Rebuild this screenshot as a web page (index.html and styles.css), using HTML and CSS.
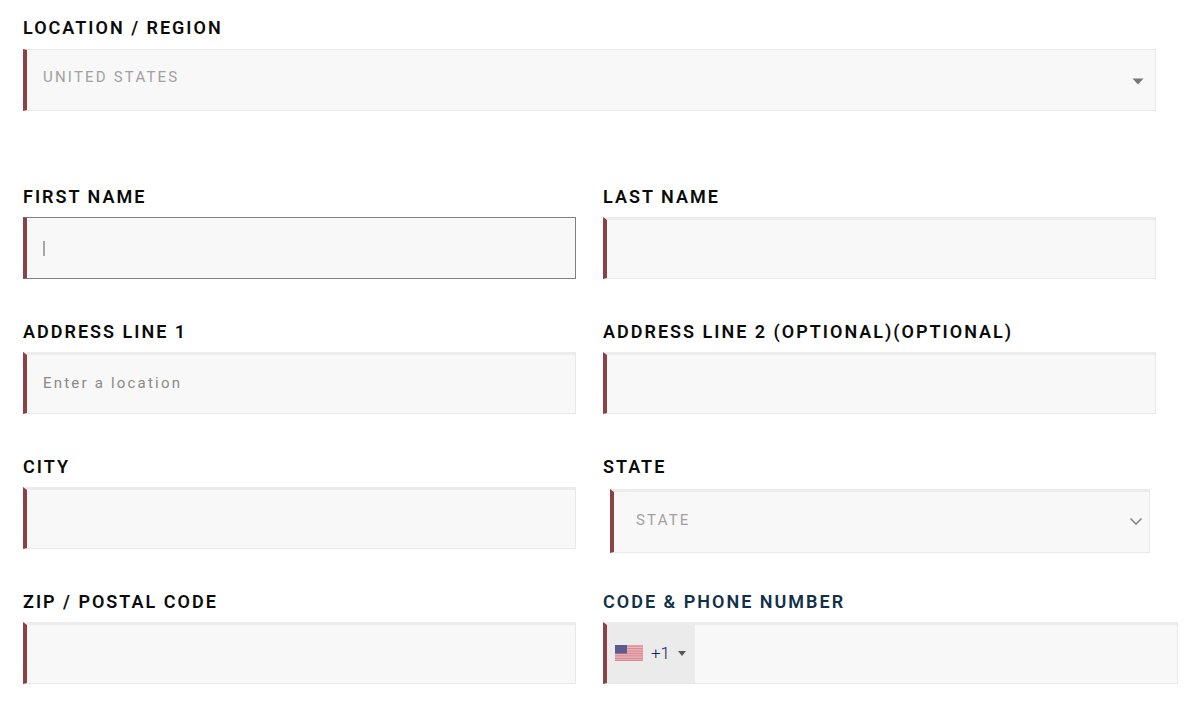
FILE: index.html
```html
<!DOCTYPE html>
<html lang="en">
<head>
  <meta charset="UTF-8" />
  <title>Address form</title>
  <link rel="stylesheet" href="styles.css">
</head>
<body>

<form class="address-form">
  <!-- Region -->
  <div class="region-row">
    <div class="group">
      <label>LOCATION / REGION</label>
      <div class="field hint">UNITED STATES
        <svg class="arrow" width="12" height="7" viewBox="0 0 12 7"><path d="M0.5 0.5h11L6 6.5z" fill="#777"/></svg>
      </div>
    </div>
  </div>

  <div class="grid">
    <div class="group">
      <label>FIRST NAME</label>
      <div class="field focused"><span class="caret"></span></div>
    </div>
    <div class="group">
      <label>LAST NAME</label>
      <div class="field top"></div>
    </div>

    <div class="group">
      <label>ADDRESS LINE 1</label>
      <div class="field top placeholder">Enter a location</div>
    </div>
    <div class="group">
      <label>ADDRESS LINE 2 (OPTIONAL)(OPTIONAL)</label>
      <div class="field top"></div>
    </div>

    <div class="group">
      <label>CITY</label>
      <div class="field top"></div>
    </div>
    <div class="group">
      <label>STATE</label>
      <div class="field top hint state">STATE
        <svg class="chevron" width="14" height="9" viewBox="0 0 14 9"><path d="M1.5 1.5L7 7l5.500-5.500" fill="none" stroke="#888" stroke-width="1.600"/></svg>
      </div>
    </div>

    <div class="group">
      <label>ZIP / POSTAL CODE</label>
      <div class="field top"></div>
    </div>
    <div class="group">
      <label class="navy">CODE &amp; PHONE NUMBER</label>
      <div class="field top phone">
        <div class="dial">
          <svg class="flag" width="28" height="16" viewBox="0 0 28 16">
            <rect width="28" height="16" fill="#e9b9be"/>
            <path d="M0 1.200h28M0 3.700h28M0 6.100h28M0 8.500h28M0 10.900h28M0 13.300h28M0 15.400h28" stroke="#d98a93" stroke-width="1.300"/>
            <rect width="12" height="8.500" fill="#5b5b8e"/>
          </svg>
          <span class="code">+1</span>
          <svg width="8" height="5" viewBox="0 0 8 5"><path d="M0 0h8L4 5z" fill="#555"/></svg>
        </div>
      </div>
    </div>
  </div>
</form>

</body>
</html>
```

FILE: styles.css
```css
body {
  margin: 0;
  background: #fff;
  font-family: Roboto, "Liberation Sans", sans-serif;
  color: #111;
}
.address-form {
  padding: 17px 0 0 23px;
}
.region-row {
  width: 1133px;
  margin-bottom: 75px;
}
.grid {
  display: grid;
  grid-template-columns: 553px 553px;
  column-gap: 27px;
  row-gap: 42px;
}
.grid .group {
  display: flex;
  flex-direction: column;
}
.grid .group label {
  margin-bottom: 10px;
}
.group label {
  display: block;
  height: 21px;
  line-height: 21px;
  margin-bottom: 11px;
  font-size: 18px;
  font-weight: 600;
  letter-spacing: 2px;
  color: #0b0b0b;
}
.group label.navy {
  color: #12304a;
}
.field {
  box-sizing: border-box;
  position: relative;
  display: flex;
  align-items: center;
  height: 62px;
  padding-left: 16px;
  background: #f8f8f8;
  border: 1px solid #e9e9e9;
  border-left: 4px solid #8c4244;
  font-size: 15px;
  letter-spacing: 2.2px;
}
.field.top {
  border-top: 3px solid #ececec;
}
.hint {
  color: #a3a09d;
  padding-bottom: 7px;
}
.hint.state {
  height: 64px;
  margin: 2px 6px -4px 7px;
  padding: 0 0 5px 22px;
}
.placeholder {
  color: #8b8886;
  padding-bottom: 2px;
}
.field.focused {
  border: 1px solid #808080;
  border-left: 4px solid #8c4244;
}
.caret {
  width: 2px;
  height: 15px;
  background: #a8a8a8;
}
.arrow {
  position: absolute;
  right: 11px;
  top: 28px;
}
.chevron {
  position: absolute;
  right: 6px;
  top: 25px;
}
.field.phone {
  width: 575px;
  padding-left: 0;
  align-items: stretch;
}
.dial {
  display: flex;
  align-items: center;
  width: 88px;
  padding: 0 0 2px 8px;
  box-sizing: border-box;
  background: #ebebeb;
}
.code {
  margin: 0 8px 0 8px;
  font-size: 17px;
  font-weight: 300;
  letter-spacing: 0;
  color: #14245c;
}
```
